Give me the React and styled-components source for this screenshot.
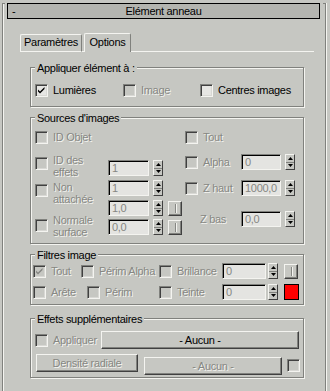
import React from 'react';
import styled, { createGlobalStyle } from 'styled-components';

const BG = '#c6c7c2';
const DARK = '#80817d';
const DARKER = '#404040';
const LIGHT = '#f4f4f0';
const DIS = '#868783';

const GlobalStyle = createGlobalStyle`
  html, body { margin: 0; padding: 0; background: ${BG}; }
  body {
    font-family: "Liberation Sans", Arial, sans-serif;
    font-size: 11px;
    letter-spacing: -0.3px;
    color: #000;
  }
`;

const Page = styled.div`
  padding: 11px 0 0 2px;
  height: 391px;
  box-sizing: border-box;
  overflow: hidden;
`;

const Frame = styled.div`
  position: relative;
  width: 324px;
  height: 390px;
  box-sizing: border-box;
  border-left: 1px solid ${DARK};
  border-right: 1px solid ${DARK};
  box-shadow: inset 1px 0 0 ${LIGHT}, 1px 0 0 ${LIGHT};
  &::before,
  &::after {
    content: '';
    position: absolute;
    top: 0;
    width: 2px;
    height: 1px;
    background: ${DARK};
  }
  &::before { left: 0; }
  &::after { right: 0; }
`;

const TitleBar = styled.div`
  position: relative;
  z-index: 1;
  margin: -8px 5px 0 4px;
  height: 16px;
  box-sizing: border-box;
  border: 1px solid #000;
  background: #b4b5b0;
  display: grid;
  grid-template-columns: 1fr auto 1fr;
  align-items: center;
  line-height: 13px;
`;

const Collapse = styled.span`
  padding-left: 4px;
`;

const TabStrip = styled.div`
  display: flex;
  align-items: flex-end;
  margin: 14px 11px 0 17px;
`;

const Tab = styled.div`
  width: ${p => p.$w}px;
  height: ${p => (p.$active ? 19 : 18)}px;
  box-sizing: border-box;
  padding: ${p => (p.$active ? 2 : 1)}px 0 0;
  border: 1px solid ${LIGHT};
  border-right-color: ${DARK};
  border-bottom: ${p => (p.$active ? 'none' : `1px solid ${LIGHT}`)};
  border-radius: 2px 2px 0 0;
  text-align: center;
  line-height: 13px;
`;

const TabLine = styled.div`
  flex: ${p => (p.$fill ? 1 : 'none')};
  width: ${p => (p.$fill ? 'auto' : `${p.$w}px`)};
  height: 1px;
  background: ${LIGHT};
`;

const Group = styled.div`
  margin: ${p => p.$mt}px 21px 0 27px;
  border: 1px solid ${DARK};
  box-shadow: inset 1px 1px 0 ${LIGHT}, 1px 1px 0 ${LIGHT};
  padding-bottom: ${p => p.$pb}px;
`;

const GroupTitle = styled.div`
  margin: -6px 0 0 4px;
  width: fit-content;
  padding: 0 2px;
  background: ${BG};
  line-height: 13px;
  white-space: nowrap;
`;

const Body = styled.div`
  padding-left: ${p => p.$pl}px;
`;

const Columns = styled.div`
  display: flex;
  padding-left: 4px;
`;

const Column = styled.div`
  display: flex;
  flex-direction: column;
  width: ${p => (p.$w ? `${p.$w}px` : 'auto')};
  flex: none;
`;

const Row = styled.div`
  display: flex;
  align-items: ${p => p.$align || 'center'};
  margin-top: ${p => p.$mt || 0}px;
  padding-left: ${p => p.$pl || 0}px;
`;

const Grid3 = styled.div`
  display: grid;
  grid-template-columns: 88px 77px auto;
  margin-top: ${p => p.$mt}px;
  padding-left: 4px;
`;

const CheckItem = styled.div`
  display: flex;
  align-items: center;
  gap: 5px;
  flex: none;
  width: ${p => (p.$w ? `${p.$w}px` : 'auto')};
`;

const Box = styled.span`
  flex: none;
  display: block;
  width: 13px;
  height: 13px;
  box-sizing: border-box;
  margin: ${p => p.$mt || 0}px 0 0 ${p => p.$ml || 0}px;
  border: 1px solid;
  border-color: ${DARK} ${LIGHT} ${LIGHT} ${DARK};
  box-shadow: inset 1px 1px 0 ${DARKER}, inset -1px -1px 0 #d8d8d4;
  background: ${p => (p.$disabled ? BG : '#e6e6e3')};
  svg { display: block; }
`;

const Label = styled.span`
  display: block;
  flex: none;
  width: ${p => (p.$w ? `${p.$w}px` : 'auto')};
  margin: ${p => p.$mt || 0}px 0 0 ${p => p.$ml || 0}px;
  color: ${p => (p.$disabled ? DIS : '#000')};
  text-shadow: ${p => (p.$disabled ? `1px 1px 0 ${LIGHT}` : 'none')};
  line-height: ${p => p.$lh || 13}px;
  white-space: nowrap;
`;

const Field = styled.div`
  flex: none;
  width: ${p => p.$w}px;
  height: 16px;
  box-sizing: border-box;
  margin-top: ${p => p.$mt || 0}px;
  border: 1px solid;
  border-color: ${DARK} ${LIGHT} ${LIGHT} ${DARK};
  box-shadow: inset 1px 1px 0 #000;
  background: #e4e4e1;
  color: ${DIS};
  padding: 1px 0 0 3px;
  line-height: 13px;
  white-space: nowrap;
  overflow: hidden;
`;

const Spinner = styled.div`
  flex: none;
  width: 10px;
  height: 16px;
  box-sizing: border-box;
  margin: ${p => p.$mt || 0}px 0 0 ${p => p.$ml}px;
  border: 1px solid;
  border-color: ${LIGHT} ${DARKER} ${DARKER} ${LIGHT};
  display: flex;
  flex-direction: column;
`;

const SpinHalf = styled.div`
  flex: 1;
  display: flex;
  align-items: center;
  justify-content: center;
  border-bottom: ${p => (p.$top ? `1px solid ${DARK}` : 'none')};
  svg { display: block; }
`;

const MiniBtn = styled.div`
  flex: none;
  width: 14px;
  height: 15px;
  box-sizing: border-box;
  margin: ${p => p.$mt || 0}px 0 0 ${p => p.$ml}px;
  border: 1px solid;
  border-color: ${LIGHT} ${DARKER} ${DARKER} ${LIGHT};
  box-shadow: inset -1px -1px 0 ${DARK};
  display: flex;
  align-items: center;
  justify-content: center;
  &::before {
    content: '';
    width: 1px;
    height: 9px;
    background: ${DIS};
    box-shadow: 1px 0 0 ${LIGHT};
  }
`;

const Swatch = styled.div`
  flex: none;
  width: 15px;
  height: 16px;
  box-sizing: border-box;
  margin-left: ${p => p.$ml}px;
  border: 1px solid #000;
  background: #ff0000;
`;

const Button = styled.div`
  flex: none;
  width: ${p => p.$w}px;
  height: 18px;
  box-sizing: border-box;
  margin: ${p => p.$mt || 0}px 0 0 ${p => p.$ml || 0}px;
  border: 1px solid;
  border-color: ${LIGHT} ${DARKER} ${DARKER} ${LIGHT};
  box-shadow: inset -1px -1px 0 ${DARK};
  display: flex;
  align-items: center;
  justify-content: center;
  line-height: 13px;
  color: ${p => (p.$disabled ? DIS : '#000')};
  text-shadow: ${p => (p.$disabled ? `1px 1px 0 ${LIGHT}` : 'none')};
`;

const FieldStack = styled.div`
  display: flex;
  flex-direction: column;
  gap: 4px;
`;

function Check({ checked, disabled, mt, ml }) {
  return (
    <Box $disabled={disabled} $mt={mt} $ml={ml}>
      {checked && (
        <svg width="11" height="11" viewBox="0 0 11 11">
          <path
            d="M2 4.5 L4 6.5 L8.5 2 L8.5 4 L4 8.5 L2 6.5 Z"
            fill={disabled ? DIS : '#000'}
          />
        </svg>
      )}
    </Box>
  );
}

function CheckLabel({ text, checked, disabled, w }) {
  return (
    <CheckItem $w={w}>
      <Check checked={checked} disabled={disabled} />
      <Label $disabled={disabled}>{text}</Label>
    </CheckItem>
  );
}

function Spin({ ml = 4, mt }) {
  return (
    <Spinner $ml={ml} $mt={mt}>
      <SpinHalf $top>
        <svg width="5" height="3" viewBox="0 0 5 3"><path d="M0 3 L2.5 0 L5 3 Z" fill="#000" /></svg>
      </SpinHalf>
      <SpinHalf>
        <svg width="5" height="3" viewBox="0 0 5 3"><path d="M0 0 L5 0 L2.5 3 Z" fill="#000" /></svg>
      </SpinHalf>
    </Spinner>
  );
}

export default function App() {
  return (
    <>
      <GlobalStyle />
      <Page>
        <Frame>
          <TitleBar>
            <Collapse>-</Collapse>
            <span>Elément anneau</span>
            <span />
          </TitleBar>

          <TabStrip>
            <Tab $w={62}>Paramètres</Tab>
            <TabLine $w={2} />
            <Tab $w={47} $active>Options</Tab>
            <TabLine $fill />
          </TabStrip>

          <Group $mt={15} $pb={9}>
            <GroupTitle>Appliquer élément à :</GroupTitle>
            <Grid3 $mt={9}>
              <CheckLabel text="Lumières" checked />
              <CheckLabel text="Image" disabled />
              <CheckLabel text="Centres images" />
            </Grid3>
          </Group>

          <Group $mt={10} $pb={5}>
            <GroupTitle>Sources d'images</GroupTitle>
            <Columns>
              <Column $w={150}>
                <Row $mt={6}>
                  <CheckLabel text="ID Objet" disabled />
                </Row>
                <Row $mt={10} $align="flex-start">
                  <Check disabled mt={3} />
                  <Label $disabled $lh={12} $w={55} $ml={5}>ID des<br />effets</Label>
                  <Field $w={41} $mt={6}>1</Field>
                  <Spin mt={6} />
                </Row>
                <Row $mt={2} $align="flex-start">
                  <Check disabled mt={4} />
                  <Label $disabled $lh={12} $w={55} $mt={1} $ml={5}>Non<br />attachée</Label>
                  <FieldStack>
                    <Row>
                      <Field $w={41}>1</Field>
                      <Spin />
                    </Row>
                    <Row>
                      <Field $w={41}>1,0</Field>
                      <Spin />
                      <MiniBtn $ml={5} />
                    </Row>
                  </FieldStack>
                </Row>
                <Row $mt={-2} $align="flex-start">
                  <Check disabled mt={5} />
                  <Label $disabled $lh={12} $w={55} $ml={5}>Normale<br />surface</Label>
                  <Field $w={41} $mt={5}>0,0</Field>
                  <Spin mt={5} />
                  <MiniBtn $ml={5} $mt={6} />
                </Row>
              </Column>
              <Column>
                <Row $mt={6}>
                  <CheckLabel text="Tout" disabled />
                </Row>
                <Row $mt={10}>
                  <CheckLabel text="Alpha" disabled w={56} />
                  <Field $w={40}>0</Field>
                  <Spin />
                </Row>
                <Row $mt={10}>
                  <CheckLabel text="Z haut" disabled w={56} />
                  <Field $w={40}>1000,0</Field>
                  <Spin />
                </Row>
                <Row $mt={15} $pl={15}>
                  <Label $disabled $w={41}>Z bas</Label>
                  <Field $w={40}>0,0</Field>
                  <Spin />
                </Row>
              </Column>
            </Columns>
          </Group>

          <Group $mt={10} $pb={4}>
            <GroupTitle>Filtres image</GroupTitle>
            <Body $pl={2}>
              <Row $mt={1}>
                <CheckLabel text="Tout" checked disabled w={48} />
                <CheckLabel text="Périm Alpha" disabled w={78} />
                <CheckLabel text="Brillance" disabled w={63} />
                <Field $w={44}>0</Field>
                <Spin ml={2} />
                <MiniBtn $ml={6} />
              </Row>
              <Row $mt={5}>
                <CheckLabel text="Arête" disabled w={54} />
                <CheckLabel text="Périm" disabled w={72} />
                <CheckLabel text="Teinte" disabled w={63} />
                <Field $w={44}>0</Field>
                <Spin ml={2} />
                <Swatch $ml={6} />
              </Row>
            </Body>
          </Group>

          <Group $mt={13} $pb={2}>
            <GroupTitle>Effets supplémentaires</GroupTitle>
            <Body $pl={4}>
              <Row $mt={5}>
                <CheckLabel text="Appliquer" disabled w={66} />
                <Button $w={198}>- Aucun -</Button>
              </Row>
              <Row $mt={5} $align="flex-start">
                <Button $w={102} $ml={1} $disabled>Densité radiale</Button>
                <Button $w={138} $ml={6} $mt={3} $disabled>- Aucun -</Button>
                <Check disabled mt={5} ml={5} />
              </Row>
            </Body>
          </Group>
        </Frame>
      </Page>
    </>
  );
}
